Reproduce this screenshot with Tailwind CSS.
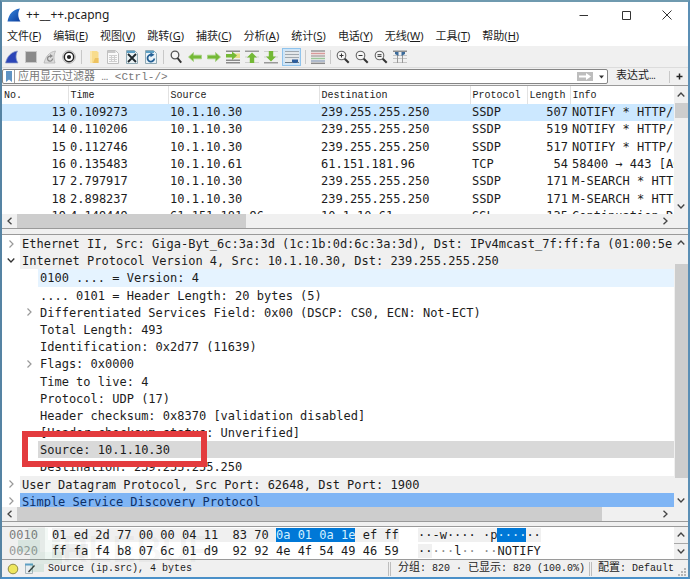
<!DOCTYPE html>
<html lang="zh-CN">
<head>
<meta charset="utf-8">
<title>++__++.pcapng</title>
<script src="https://cdn.jsdelivr.net/npm/@tailwindcss/browser@4"></script>
</head>
<body class="bg-white">
<div class="relative flex h-screen flex-col overflow-hidden border-t-2 border-r-2 border-b-2 border-l-2 border-t-[#6f9aaf] border-r-[#5b8fb5] border-b-[#4a90c8] border-l-[#5583a3] bg-[#f0f0f0] font-['Noto_Sans','Noto_Sans_CJK_SC',sans-serif] text-[12px] text-[#1c1c1c]">

  <!-- Title bar -->
  <header class="flex h-[25px] shrink-0 items-center bg-white pl-[5px]">
    <svg class="h-[14px] w-[14px]" viewBox="0 0 14 14"><defs><linearGradient id="fin" x1="0" y1="0" x2="1" y2="1"><stop offset="0" stop-color="#3a8be0"/><stop offset="1" stop-color="#0a3c9c"/></linearGradient></defs><path d="M.5 13.5C1.800 6.500 5.500 1.500 13 .5 10.500 4.500 10.800 9.500 13.500 13.500Z" fill="url(#fin)"/></svg>
    <h1 class="ml-[5px] flex-1">++__++.pcapng</h1>
    <div class="flex h-full items-center pr-[1px]">
      <button aria-label="最小化" class="flex h-full w-[42px] items-center justify-center"><svg class="h-[10px] w-[10px]" viewBox="0 0 10 10" stroke="#333"><path d="M.5 5.500H9"/></svg></button>
      <button aria-label="最大化" class="flex h-full w-[42px] items-center justify-center"><svg class="h-[10px] w-[10px]" viewBox="0 0 10 10" stroke="#333" fill="none"><path d="M1.500 1.500h8v8h-8z"/></svg></button>
      <button aria-label="关闭" class="flex h-full w-[40px] items-center justify-center"><svg class="h-[10px] w-[10px]" viewBox="0 0 10 10" stroke="#333"><path d="M.5.5l9 9M9.500.5l-9 9"/></svg></button>
    </div>
  </header>

  <!-- Menu bar -->
  <nav class="flex h-[19px] shrink-0 items-center gap-[12px] bg-white pl-[5px] text-[11px] whitespace-nowrap">
    <button>文件(<u>F</u>)</button>
    <button>编辑(<u>E</u>)</button>
    <button>视图(<u>V</u>)</button>
    <button>跳转(<u>G</u>)</button>
    <button>捕获(<u>C</u>)</button>
    <button>分析(<u>A</u>)</button>
    <button>统计(<u>S</u>)</button>
    <button>电话(<u>Y</u>)</button>
    <button>无线(<u>W</u>)</button>
    <button>工具(<u>T</u>)</button>
    <button>帮助(<u>H</u>)</button>
  </nav>

  <!-- Toolbar -->
  <div class="flex h-[21px] shrink-0 items-center gap-[3px] pl-[2px]">
    <button aria-label="开始捕获"><svg class="h-4 w-4" viewBox="0 0 16 16"><path d="M1.500 14C3 8 6.500 3 13.500 2 11.500 6 11.500 10 14 14Z" fill="#2b45b8" stroke="#8f9dc4" stroke-width=".7"/></svg></button>
    <button aria-label="停止捕获"><svg class="h-4 w-4" viewBox="0 0 16 16"><rect x="2" y="2" width="12" height="12" fill="#c9c9c9"/><rect x="3" y="3" width="10" height="10" fill="#8a8a8a"/></svg></button>
    <button aria-label="重新开始捕获"><svg class="h-4 w-4" viewBox="0 0 16 16" fill="none"><path d="M2 14C3.500 8 7 3 13.500 2 11.500 6 11.500 10 13 14Z" fill="#dcdcdc" stroke="#b5b5b5" stroke-width=".8"/><path d="M10.500 9.500a2.500 2.500 0 1 1-2-2.300" stroke="#8a8a8a" stroke-width="1.300"/><path d="M8 5l3 2-3 2z" fill="#8a8a8a"/></svg></button>
    <button aria-label="捕获选项"><svg class="h-4 w-4" viewBox="0 0 16 16" fill="none"><circle cx="8" cy="8" r="6.300" stroke="#b0b0b0" stroke-width="1"/><circle cx="8" cy="8" r="4.700" fill="#fff" stroke="#222" stroke-width="1.500"/><circle cx="8" cy="8" r="2.100" fill="#222"/></svg></button>
    <span class="mx-[1px] h-[14px] w-px bg-[#c8c8c8]"></span>
    <button aria-label="打开"><svg class="h-4 w-4" viewBox="0 0 16 16"><path d="M4 2h7l1.500 1.500V14H4z" fill="#f8dc8c"/><path d="M9 9h3.500v5H7z" fill="#edc260"/><path d="M4 2h2v12H4z" fill="#fbe7ae"/></svg></button>
    <button aria-label="保存"><svg class="h-4 w-4" viewBox="0 0 16 16" fill="none"><path d="M2.500 1.500h8l3 3v10h-11z" fill="#fafafa" stroke="#c0c0c0"/><path d="M3 3h7.500" stroke="#c8c8c8" stroke-width="2"/><path d="M4 6.500h8M4 8.500h8M4 10.500h8M4 12.500h8M6.500 6v7M9.500 6v7" stroke="#cfcfcf"/></svg></button>
    <button aria-label="关闭文件"><svg class="h-4 w-4" viewBox="0 0 16 16" fill="none"><path d="M2.500 1.500h8l3 3v10h-11z" fill="#e9f1f4" stroke="#8fa9b4"/><path d="M3 3h8" stroke="#5d9fc4" stroke-width="2"/><path d="M4 5l8 8M12 5l-8 8" stroke="#1d262c" stroke-width="1.800"/></svg></button>
    <button aria-label="重新加载"><svg class="h-4 w-4" viewBox="0 0 16 16" fill="none"><path d="M2.500 1.500h8l3 3v10h-11z" fill="#eaf3f8" stroke="#8fa9b4"/><path d="M3 3h8" stroke="#5d9fc4" stroke-width="2"/><path d="M11.300 9.500A3.400 3.400 0 1 1 8.500 5.800" stroke="#235f94" stroke-width="1.800"/><path d="M7.500 3.500l4 2.300-4 2.400z" fill="#235f94"/></svg></button>
    <span class="mx-[1px] h-[14px] w-px bg-[#c8c8c8]"></span>
    <button aria-label="查找"><svg class="h-4 w-4" viewBox="0 0 16 16" fill="none"><circle cx="7" cy="6" r="3.800" fill="#f6f6f6" stroke="#555" stroke-width="1.300"/><path d="M9.500 9l3.700 4.700" stroke="#333" stroke-width="2"/></svg></button>
    <button aria-label="上一分组"><svg class="h-4 w-4" viewBox="0 0 16 16"><path d="M1.500 8l5-4.500v2.700h8v3.600h-8v2.700z" fill="#74b936" stroke="#a5cf80" stroke-width=".8"/></svg></button>
    <button aria-label="下一分组"><svg class="h-4 w-4" viewBox="0 0 16 16"><path d="M14.500 8l-5-4.500v2.700h-8v3.600h8v2.700z" fill="#74b936" stroke="#a5cf80" stroke-width=".8"/></svg></button>
    <button aria-label="转到分组"><svg class="h-4 w-4" viewBox="0 0 16 16"><path d="M1 1.500h14V3H1zM1 10.500h14V12H1zM1 13h14v1.500H1z" fill="#8b8b8b"/><path d="M8 4.500h7v4.500H8z" fill="#e8e08a"/><path d="M12 6.500L7 2.500V5H1v3.500h6V11z" fill="#74b936"/></svg></button>
    <button aria-label="首个分组"><svg class="h-4 w-4" viewBox="0 0 16 16"><path d="M1 1.500h14V3H1z" fill="#9a9a9a"/><path d="M1 8h14M1 13.500h14" stroke="#d0d0d0"/><path d="M8 3.500l5 5h-2.800V14H5.800V8.500H3z" fill="#74b936"/></svg></button>
    <button aria-label="最新分组"><svg class="h-4 w-4" viewBox="0 0 16 16"><path d="M1 2.500h14M1 8h14" stroke="#d0d0d0"/><path d="M1 13h14v1.500H1z" fill="#9a9a9a"/><path d="M8 12.500l5-5h-2.800V2H5.800v5.500H3z" fill="#74b936"/></svg></button>
    <button aria-label="自动滚动" aria-pressed="true" class="flex h-[18px] w-[19px] items-center justify-center border border-[#8fc3ec] bg-[#cfe5f7]"><svg class="h-4 w-4" viewBox="0 0 16 16"><path d="M1 2h14v11.500H1z" fill="#e4e8ea"/><path d="M1 2.500h14M1 5.500h14M1 8.500h14" stroke="#9fa8ae"/><path d="M1 13.500h14" stroke="#6b7a86"/><path d="M8 10.500h6v2L12.500 14h-3L8 12.500z" fill="#2d5d9c"/></svg></button>
    <span class="mx-[1px] h-[14px] w-px bg-[#c8c8c8]"></span>
    <button aria-label="着色"><svg class="h-4 w-4" viewBox="0 0 16 16" stroke-width="1.500"><path d="M1 2h14" stroke="#999"/><path d="M1 4.500h14" stroke="#d99a9a"/><path d="M1 7h14" stroke="#b0a7a7"/><path d="M1 9.500h14" stroke="#9cc79a"/><path d="M1 12h14" stroke="#9aa9c0"/><path d="M1 14.300h14" stroke="#8b8b8b"/></svg></button>
    <span class="mx-[1px] h-[14px] w-px bg-[#c8c8c8]"></span>
    <button aria-label="放大"><svg class="h-4 w-4" viewBox="0 0 16 16" fill="none"><circle cx="6.500" cy="6.500" r="4.300" fill="#f6f6f6" stroke="#666" stroke-width="1.100"/><path d="M9.700 9.700l4 4" stroke="#333" stroke-width="2"/><path d="M4.500 6.500h4M6.500 4.500v4" stroke="#333"/></svg></button>
    <button aria-label="缩小"><svg class="h-4 w-4" viewBox="0 0 16 16" fill="none"><circle cx="6.500" cy="6.500" r="4.300" fill="#f6f6f6" stroke="#666" stroke-width="1.100"/><path d="M9.700 9.700l4 4" stroke="#333" stroke-width="2"/><path d="M4.500 6.500h4" stroke="#333"/></svg></button>
    <button aria-label="原始大小"><svg class="h-4 w-4" viewBox="0 0 16 16" fill="none"><circle cx="6.500" cy="6.500" r="4.300" fill="#f6f6f6" stroke="#666" stroke-width="1.100"/><path d="M9.700 9.700l4 4" stroke="#333" stroke-width="2"/><path d="M4.500 5.700h4M4.500 7.400h4" stroke="#333"/></svg></button>
    <button aria-label="调整列宽"><svg class="h-4 w-4" viewBox="0 0 16 16"><path d="M1 1.500h14V3H1z" fill="#8d8d8d"/><path d="M1 6.500h14M1 9.500h14M1 13.500h14" stroke="#c4c4c4"/><path d="M5.500 3v11M10.500 3v11" stroke="#999"/><path d="M3 3h3.500v4L3 5zM13 3H9.500v4L13 5z" fill="#3b6a9a"/></svg></button>
  </div>

  <!-- Display filter -->
  <form class="flex h-[18px] shrink-0 items-center border-t border-[#dcdcdc] font-['Liberation_Mono','Noto_Sans_CJK_SC',monospace] text-[11px]">
    <div class="flex h-[15px] w-[606px] min-w-0 shrink items-center rounded-[2px] border border-[#858585] bg-white">
      <button type="button" aria-label="书签" class="flex h-full w-[12px] items-center justify-center border-r border-[#a0a0a0]"><svg class="h-[11px] w-[6px]" viewBox="0 0 6 11"><path d="M0 0h6v11L3 8.500 0 11z" fill="#5f93c4"/></svg></button>
      <input aria-label="应用显示过滤器" placeholder="应用显示过滤器 … &lt;Ctrl-/&gt;" class="h-full min-w-0 flex-1 pl-[3px] outline-none placeholder:text-[#777]">
      <button type="button" aria-label="应用" class="mr-[6px] flex h-[9px] w-[16px] items-center justify-center bg-[#bdbdbd]"><svg class="h-[7px] w-[12px]" viewBox="0 0 12 7"><path d="M0 2.500h7V0l5 3.500L7 7V4.500H0z" fill="#fff"/></svg></button>
      <button type="button" aria-label="历史" class="mr-[3px]"><svg class="h-[4px] w-[5px]" viewBox="0 0 5 4"><path d="M0 .5h5L2.500 3.500z" fill="#333"/></svg></button>
    </div>
    <button type="button" class="ml-[8px] whitespace-nowrap">表达式…</button>
    <span class="ml-auto h-[12px] w-px bg-[#c8c8c8]"></span>
    <button type="button" aria-label="添加" class="mr-[5px] ml-[6px]"><svg class="h-[7px] w-[7px]" viewBox="0 0 7 7"><path d="M3.500.5v6M.5 3.500h6" stroke="#222" stroke-width="1.500"/></svg></button>
  </form>

  <!-- Packet list -->
  <section class="shrink-0 border-y border-[#9a9a9a] bg-white">
    <div class="flex h-[128px]">
      <div class="min-w-0 flex-1 overflow-hidden">
        <table class="h-[139px] w-full table-fixed border-collapse font-['DejaVu_Sans_Mono',monospace] leading-[17px] whitespace-nowrap [&_td]:h-[17px] [&_td]:overflow-hidden [&_td]:px-[2px] [&_td]:py-0 [&_th]:h-[18px] [&_th]:overflow-hidden [&_th]:px-[2px] [&_th]:py-0 [&_th]:text-left [&_th]:font-normal">
          <colgroup><col class="w-[66px]"><col class="w-[100px]"><col class="w-[151px]"><col class="w-[151px]"><col class="w-[57px]"><col class="w-[43px]"><col></colgroup>
          <thead class="font-['Liberation_Mono',monospace] text-[10px] [&_th+th]:border-l [&_th+th]:border-[#e2e2e2]">
            <tr><th>No.</th><th>Time</th><th>Source</th><th>Destination</th><th>Protocol</th><th>Length</th><th>Info</th></tr>
          </thead>
          <tbody class="[&_td:first-child]:text-right [&_td:nth-child(6)]:text-right">
            <tr class="bg-[#cce8ff]"><td>13</td><td>0.109273</td><td>10.1.10.30</td><td>239.255.255.250</td><td>SSDP</td><td>507</td><td>NOTIFY * HTTP/1.1</td></tr>
            <tr><td>14</td><td>0.110206</td><td>10.1.10.30</td><td>239.255.255.250</td><td>SSDP</td><td>519</td><td>NOTIFY * HTTP/1.1</td></tr>
            <tr><td>15</td><td>0.112746</td><td>10.1.10.30</td><td>239.255.255.250</td><td>SSDP</td><td>517</td><td>NOTIFY * HTTP/1.1</td></tr>
            <tr><td>16</td><td>0.135483</td><td>10.1.10.61</td><td>61.151.181.96</td><td>TCP</td><td>54</td><td>58400 → 443 [ACK]</td></tr>
            <tr><td>17</td><td>2.797917</td><td>10.1.10.30</td><td>239.255.255.250</td><td>SSDP</td><td>171</td><td>M-SEARCH * HTTP/1.1</td></tr>
            <tr><td>18</td><td>2.898237</td><td>10.1.10.30</td><td>239.255.255.250</td><td>SSDP</td><td>171</td><td>M-SEARCH * HTTP/1.1</td></tr>
            <tr><td>19</td><td>4.149449</td><td>61.151.181.96</td><td>10.1.10.61</td><td>SSL</td><td>135</td><td>Continuation Data</td></tr>
          </tbody>
        </table>
      </div>
      <div class="flex w-[14px] flex-col items-center bg-[#f0f0f0]">
        <button aria-label="向上" class="flex h-[17px] items-center"><svg class="h-[5px] w-[8px]" viewBox="0 0 8 5" fill="none" stroke="#444" stroke-width="1.300"><path d="M.7 4.500L4 1l3.300 3.500"/></svg></button>
        <div class="h-[15px] w-[13px] bg-[#cdcdcd]"></div>
        <button aria-label="向下" class="mt-auto flex h-[16px] items-center"><svg class="h-[5px] w-[8px]" viewBox="0 0 8 5" fill="none" stroke="#444" stroke-width="1.300"><path d="M.7.5L4 4 7.300.5"/></svg></button>
      </div>
    </div>
    <div class="flex h-[14px] items-center bg-[#f0f0f0] pr-[20px]">
      <button aria-label="向左" class="flex w-[15px] justify-center"><svg class="h-[8px] w-[5px]" viewBox="0 0 5 8" fill="none" stroke="#444" stroke-width="1.300"><path d="M4.500.7L1 4l3.500 3.300"/></svg></button>
      <div class="h-full w-[229px] bg-[#cdcdcd]"></div>
      <button aria-label="向右" class="ml-auto"><svg class="h-[8px] w-[5px]" viewBox="0 0 5 8" fill="none" stroke="#444" stroke-width="1.300"><path d="M.5.7L4 4 .5 7.300"/></svg></button>
    </div>
  </section>

  <!-- Packet details -->
  <section class="mt-[5px] flex min-h-0 flex-1 flex-col border-y border-[#9a9a9a] bg-white">
    <div class="flex min-h-0 flex-1 overflow-hidden">
      <ul class="-mb-[3px] grid min-w-0 flex-1 auto-rows-fr overflow-hidden font-['DejaVu_Sans_Mono',monospace] leading-[18px] whitespace-pre [&_button]:flex [&_button]:w-[18px] [&_button]:shrink-0 [&_button]:items-center [&_button]:justify-center [&>li]:flex [&>li]:min-h-0 [&_span]:flex-1 [&_span]:pl-[2px]">
        <li><button aria-label="展开"><svg class="h-[8px] w-[5px]" viewBox="0 0 5 8" fill="none" stroke="#999" stroke-width="1.200"><path d="M.5.5L4 4 .5 7.500"/></svg></button><span class="bg-[#f0f0f0]">Ethernet II, Src: Giga-Byt_6c:3a:3d (1c:1b:0d:6c:3a:3d), Dst: IPv4mcast_7f:ff:fa (01:00:5e:</span></li>
        <li><button aria-label="折叠"><svg class="h-[5px] w-[8px]" viewBox="0 0 8 5" fill="none" stroke="#333" stroke-width="1.300"><path d="M.7.5L4 4 7.300.5"/></svg></button><span class="bg-[#f0f0f0]">Internet Protocol Version 4, Src: 10.1.10.30, Dst: 239.255.255.250</span></li>
        <li class="pl-[36px]"><span class="bg-[#e5f3ff]">0100 .... = Version: 4</span></li>
        <li class="pl-[36px]"><span>.... 0101 = Header Length: 20 bytes (5)</span></li>
        <li class="pl-[18px]"><button aria-label="展开"><svg class="h-[8px] w-[5px]" viewBox="0 0 5 8" fill="none" stroke="#999" stroke-width="1.200"><path d="M.5.5L4 4 .5 7.500"/></svg></button><span>Differentiated Services Field: 0x00 (DSCP: CS0, ECN: Not-ECT)</span></li>
        <li class="pl-[36px]"><span>Total Length: 493</span></li>
        <li class="pl-[36px]"><span>Identification: 0x2d77 (11639)</span></li>
        <li class="pl-[18px]"><button aria-label="展开"><svg class="h-[8px] w-[5px]" viewBox="0 0 5 8" fill="none" stroke="#999" stroke-width="1.200"><path d="M.5.5L4 4 .5 7.500"/></svg></button><span>Flags: 0x0000</span></li>
        <li class="pl-[36px]"><span>Time to live: 4</span></li>
        <li class="pl-[36px]"><span>Protocol: UDP (17)</span></li>
        <li class="pl-[36px]"><span>Header checksum: 0x8370 [validation disabled]</span></li>
        <li class="pl-[36px]"><span>[Header checksum status: Unverified]</span></li>
        <li class="relative pl-[36px]"><span class="bg-[#d9d9d9]">Source: 10.1.10.30</span><div class="absolute -top-[10px] left-[20px] z-10 h-[36px] w-[185px] border-[6px] border-[#e33b3e]"></div></li>
        <li class="pl-[36px]"><span>Destination: 239.255.255.250</span></li>
        <li><button aria-label="展开"><svg class="h-[8px] w-[5px]" viewBox="0 0 5 8" fill="none" stroke="#999" stroke-width="1.200"><path d="M.5.5L4 4 .5 7.500"/></svg></button><span class="bg-[#f0f0f0]">User Datagram Protocol, Src Port: 62648, Dst Port: 1900</span></li>
        <li class="overflow-hidden"><button aria-label="展开"><svg class="h-[8px] w-[5px]" viewBox="0 0 5 8" fill="none" stroke="#999" stroke-width="1.200"><path d="M.5.5L4 4 .5 7.500"/></svg></button><span class="bg-[#7fb5f5] text-[#0d2f66]">Simple Service Discovery Protocol</span></li>
      </ul>
      <div class="flex w-[14px] flex-col items-center bg-[#f0f0f0]">
        <button aria-label="向上" class="flex h-[15px] items-center"><svg class="h-[5px] w-[8px]" viewBox="0 0 8 5" fill="none" stroke="#444" stroke-width="1.300"><path d="M.7 4.500L4 1l3.300 3.500"/></svg></button>
        <div class="mt-[14px] mb-[15px] w-[13px] flex-1 bg-[#cdcdcd]"></div>
        <button aria-label="向下" class="flex h-[14px] items-center"><svg class="h-[5px] w-[8px]" viewBox="0 0 8 5" fill="none" stroke="#444" stroke-width="1.300"><path d="M.7.5L4 4 7.300.5"/></svg></button>
      </div>
    </div>
    <div class="flex h-[14px] shrink-0 items-center bg-[#f0f0f0] pr-[20px]">
      <button aria-label="向左" class="flex w-[15px] justify-center"><svg class="h-[8px] w-[5px]" viewBox="0 0 5 8" fill="none" stroke="#444" stroke-width="1.300"><path d="M4.500.7L1 4l3.500 3.300"/></svg></button>
      <div class="mr-[61px] h-full flex-1 bg-[#cdcdcd]"></div>
      <button aria-label="向右"><svg class="h-[8px] w-[5px]" viewBox="0 0 5 8" fill="none" stroke="#444" stroke-width="1.300"><path d="M.5.7L4 4 .5 7.300"/></svg></button>
    </div>
  </section>

  <!-- Packet bytes -->
  <section class="mt-[4px] flex h-[34px] shrink-0 border-y border-[#9a9a9a] bg-white">
    <div class="flex min-w-0 flex-1 overflow-hidden font-['DejaVu_Sans_Mono',monospace] leading-[16px] [&_p]:whitespace-pre">
      <div class="w-[43px] shrink-0 bg-[#f0f0f0] pl-[7px] text-[#7d7d7d]"><p>0010</p><p class="text-[#999]">0020</p></div>
      <div class="w-[373px] shrink-0 pl-[7px]">
        <p><span class="bg-[#f0f0f0]">01 ed 2d 77 00 00 04 11  83 70 </span><span class="bg-[#0078d7] text-[#d4f1ff]">0a 01 0a 1e</span><span class="bg-[#f0f0f0]"> ef ff</span></p>
        <p><span class="bg-[#f0f0f0]">ff fa</span> f4 b8 07 6c 01 d9  92 92 4e 4f 54 49 46 59</p>
      </div>
      <div>
        <p><span class="bg-[#f0f0f0]">··-w···· ·p</span><span class="bg-[#0078d7] text-[#d4f1ff]">····</span><span class="bg-[#f0f0f0]">··</span></p>
        <p><span class="bg-[#f0f0f0]">··</span><span class="text-[#888]">···</span>l<span class="text-[#888]">·· ··</span>NOTIFY</p>
      </div>
    </div>
    <div class="flex w-[14px] flex-col items-center bg-[#f0f0f0]">
      <button aria-label="向上" class="flex w-full flex-1 items-center justify-center border-b border-[#a8a8a8]"><svg class="h-[5px] w-[8px]" viewBox="0 0 8 5" fill="none" stroke="#444" stroke-width="1.300"><path d="M.7 4.500L4 1l3.300 3.500"/></svg></button>
      <button aria-label="向下" class="flex flex-1 items-center"><svg class="h-[5px] w-[8px]" viewBox="0 0 8 5" fill="none" stroke="#444" stroke-width="1.300"><path d="M.7.5L4 4 7.300.5"/></svg></button>
    </div>
  </section>

  <!-- Status bar -->
  <footer class="flex h-[17px] shrink-0 items-center font-['Liberation_Mono','Noto_Sans_CJK_SC',monospace] text-[10px] leading-[16px] whitespace-nowrap">
    <button aria-label="专家信息" class="ml-[5px]"><svg class="h-[12px] w-[12px]" viewBox="0 0 12 12"><circle cx="6" cy="6" r="4.800" fill="#eee65c" stroke="#8f8a45"/></svg></button>
    <button aria-label="捕获文件注释" class="ml-[5px]"><svg class="h-[12px] w-[12px]" viewBox="0 0 12 12"><path d="M1.500 1.500h7v9h-7z" fill="#e8eef1" stroke="#a9b7bd"/><path d="M1 1.500h8" stroke="#5d9fc4" stroke-width="2"/><path d="M4 8.500L10 2l1 1-6 6.500z" fill="#333"/></svg></button>
    <span class="ml-[12px] flex-1">Source (ip.src), 4 bytes</span>
    <span class="h-[14px] w-[3px] border-x border-[#bdbdbd]"></span>
    <span class="w-[198px] pl-[7px]"><span class="text-[11px]">分组</span>: 820 · <span class="text-[11px]">已显示</span>: 820 (100.0%)</span>
    <span class="h-[14px] w-[3px] border-x border-[#bdbdbd]"></span>
    <span class="pl-[6px]"><span class="text-[11px]">配置</span>: Default</span>
    <svg class="mt-auto mr-[1px] ml-[4px] h-[9px] w-[9px]" viewBox="0 0 9 9" fill="#b5b5b5"><path d="M6 0h2v2H6zM3 3h2v2H3zM6 3h2v2H6zM0 6h2v2H0zM3 6h2v2H3zM6 6h2v2H6z"/></svg>
  </footer>

  <!-- Watermark -->
  <div aria-hidden="true" class="pointer-events-none absolute bottom-[5px] left-[16px] flex items-center">
    <svg class="h-[44px] w-[44px]" viewBox="0 0 44 44" fill="#2f9e68"><path d="M10 0h20v12H10z" opacity=".06"/><path d="M0 12h22v12H0z" opacity=".12"/><path d="M12 24h32v12H12z" opacity=".09"/><path d="M22 12h20v12H22z" opacity=".05"/><path d="M12 36h14v8H12z" opacity=".12"/></svg>
    <span class="font-['Liberation_Sans',sans-serif] text-[36px] leading-[36px] font-bold text-black/4">REEBUF</span>
  </div>
</div>
</body>
</html>
